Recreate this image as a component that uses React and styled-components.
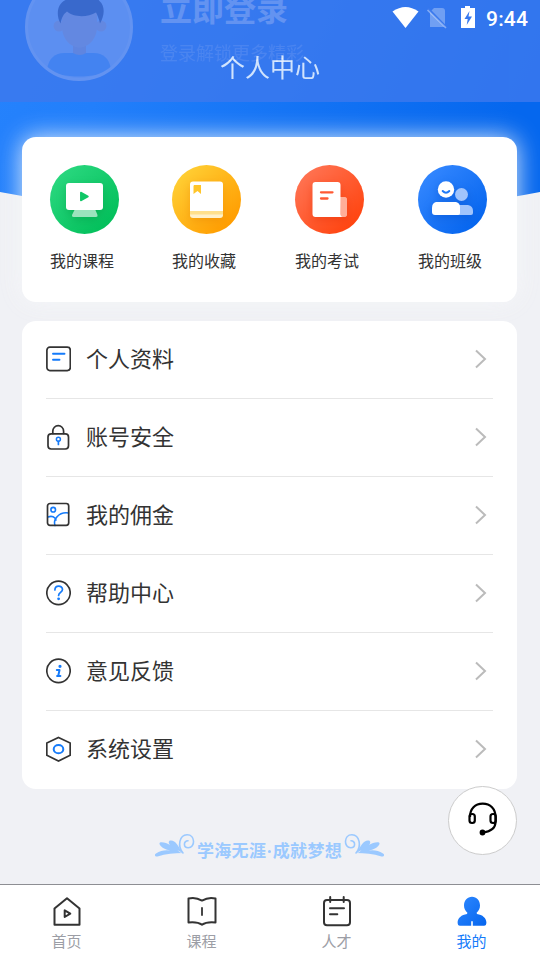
import React from "react";
import styled, { createGlobalStyle } from "styled-components";

const GlobalStyle = createGlobalStyle`
  * {
    box-sizing: border-box;
  }

  body {
    margin: 0;
    font-family: "Noto Sans CJK SC", "Noto Sans", sans-serif;
    color: #333;
  }
`;

const Screen = styled.div`
  position: relative;
  display: flex;
  flex-direction: column;
  width: 540px;
  height: 960px;
  background: #f0f1f5;
  overflow: hidden;
`;

const Content = styled.main`
  position: relative;
  flex: 1;
  min-height: 0;
  display: flex;
  flex-direction: column;
  padding: 0 23px 0 22px;
  overflow: hidden;
`;

const Backdrop = styled.div`
  position: absolute;
  top: 0;
  left: 0;
  width: 540px;
  height: 220px;
  background: linear-gradient(115deg, #2683fd 0%, #227ffb 22%, #0567ee 88%);
  clip-path: path("M0 0 H540 V192 Q405 218 270 218 Q135 218 0 192 Z");
`;

/* Profile, scrolled partly under the title bar */
const Profile = styled.section`
  position: relative;
  display: flex;
  flex: none;
  gap: 27px;
  height: 164px;
  margin-top: -27px;
  padding-left: 3px;
`;

const Avatar = styled.div`
  flex: none;
  width: 108px;
  height: 108px;
  border: 3px solid #fff;
  border-radius: 50%;
  background: #dcebff;
  overflow: hidden;

  svg {
    display: block;
  }
`;

const ProfileText = styled.div`
  color: #fff;
  padding-top: 16px;

  h2 {
    margin: 0;
    font-size: 32px;
    line-height: 36px;
    font-weight: 700;
  }

  p {
    margin: 15px 0 0;
    font-size: 18px;
    line-height: 24px;
    opacity: 0.45;
  }
`;

const Card = styled.section`
  position: relative;
  flex: none;
  background: #fff;
  border-radius: 14px;
`;

const ShortcutCard = styled(Card)`
  display: grid;
  grid-template-columns: 122px 123px 123px 1fr;
  height: 165px;
  padding: 28px 0 0 28px;
  box-shadow: 0 0 24px rgba(246, 247, 250, 0.9);
`;

const Shortcut = styled.div`
  font-size: 16px;
  line-height: 20px;
`;

const Disc = styled.div`
  width: 69px;
  height: 69px;
  margin-bottom: 16px;
  border-radius: 50%;
  background: linear-gradient(135deg, ${(p) => p.$from} 10%, ${(p) => p.$to} 88%);

  svg {
    display: block;
    filter: drop-shadow(0 3px 4px ${(p) => p.$shade});
  }
`;

const MenuCard = styled(Card)`
  margin-top: 19px;
  padding: 0 24px;
`;

const MenuRow = styled.div`
  display: flex;
  align-items: center;
  height: 78px;
  padding: 0 6px 2px 0;
  font-size: 22px;
  line-height: 30px;
  border-bottom: 1px solid ${(p) => (p.$last ? "transparent" : "#e6e6e6")};

  span {
    flex: 1;
    margin-left: 15px;
    padding-bottom: 3px;
  }
`;

const Slogan = styled.div`
  display: flex;
  justify-content: center;
  gap: 1px;
  margin-top: 44px;
  color: #9bc9ff;
  font-size: 17px;
  line-height: 34px;
  font-weight: 700;
  letter-spacing: 0.3px;
  white-space: nowrap;

  p {
    display: flex;
    justify-content: space-between;
    width: 147px;
    margin: 0;
    padding: 0 1px;
  }
`;

const Dot = styled.i`
  align-self: center;
  width: 3px;
  height: 3px;
  border-radius: 50%;
  background: currentColor;
`;

const FlippedFlourish = styled.div`
  transform: scaleX(-1);
`;

/* Title bar over the scrolled content */
const Header = styled.header`
  position: absolute;
  top: 0;
  left: 0;
  width: 540px;
  height: 102px;
  padding-top: 35px;
  background: #3d79ee;
  color: #fff;
  font-size: 25px;
  line-height: 62px;
  text-align: center;
  opacity: 0.8;
`;

const StatusBar = styled.div`
  position: absolute;
  top: 0;
  right: 0;
  display: flex;
  align-items: center;
  height: 36px;
  padding-right: 12px;
  color: #fff;
  font: 500 21px/36px Roboto, sans-serif;
  letter-spacing: 0.2px;

  span {
    width: 42px;
    margin-left: 10px;
    padding-top: 2px;
  }
`;

const ServiceButton = styled.button`
  position: absolute;
  top: 786px;
  left: 448px;
  display: flex;
  width: 69px;
  height: 69px;
  padding: 0;
  border: 1px solid #ccc;
  border-radius: 50%;
  background: #fff;
`;

const TabBar = styled.nav`
  display: grid;
  grid-template-columns: repeat(4, 1fr);
  flex: none;
  height: 76px;
  border-top: 1px solid #8d8e93;
  background: #fff;
`;

const Tab = styled.div`
  display: flex;
  flex-direction: column;
  align-items: center;
  padding: 9px 2px 0 0;
  font-size: 15px;
  line-height: 20px;
  color: ${(p) => (p.$active ? "#157bfa" : "#9c9ea6")};

  svg {
    margin-bottom: 2px;
  }
`;

const shortcuts = [
  {
    label: "我的课程",
    from: "#2bd880",
    to: "#02bf5a",
    shade: "rgba(0, 140, 60, 0.35)",
    icon: (
      <>
        <path d="M25 44h20l2.500 6q.5 2-1.500 2H23.500q-2 0-1.500-2z" fill="#9be3bd" />
        <rect x="16" y="18" width="37" height="27" rx="3" fill="#fff" />
        <path d="M30.800 27.500v8l7.200-4z" fill="#10c767" stroke="#10c767" strokeWidth="1.500" strokeLinejoin="round" />
      </>
    ),
  },
  {
    label: "我的收藏",
    from: "#ffd035",
    to: "#ff9c00",
    shade: "rgba(225, 120, 0, 0.35)",
    icon: (
      <>
        <rect x="18" y="40" width="33" height="13" rx="3" fill="#fff1cb" />
        <path d="M18 46h33v3.500H18z" fill="#ffe08c" />
        <path d="M21 16.500h27q3 0 3 3V46H18V19.500q0-3 3-3z" fill="#fff" />
        <path d="M22 20h7v9l-3.500-3-4 3v-8z" fill="#ffc52a" />
      </>
    ),
  },
  {
    label: "我的考试",
    from: "#ff7454",
    to: "#ff440f",
    shade: "rgba(220, 40, 0, 0.35)",
    icon: (
      <>
        <path d="M44 32h5q3 0 3 3v14q0 3-3 3h-5z" fill="#ffae98" />
        <path d="M20.500 17h22q3 0 3 3v29q0 3 3 3h-28q-3 0-3-3V20q0-3 3-3z" fill="#fff" />
        <path d="M46 32h3q3 0 3 3v14q0 3-3 3t-3.500-3z" fill="#ffae98" />
        <path d="M26 27.300h11.500M26 33.500h6.500" stroke="#ff5933" strokeWidth="2.300" strokeLinecap="round" />
      </>
    ),
  },
  {
    label: "我的班级",
    from: "#3487ff",
    to: "#0565ee",
    shade: "rgba(0, 70, 190, 0.35)",
    icon: (
      <>
        <circle cx="43.500" cy="29.500" r="6.500" fill="#a0c4fc" />
        <path d="M38 40h12q5 1 5 6v2q0 2-2 2H38z" fill="#a0c4fc" />
        <circle cx="28" cy="24.500" r="8.200" fill="#fff" />
        <path d="M24.700 26q3.300 3.500 6.600 0" fill="none" stroke="#207af7" strokeWidth="2" strokeLinecap="round" />
        <path d="M18 37h20q4 1 4 5v6q0 2-2 2H17q-3 0-3-3v-4q0-5 4-6z" fill="#fff" />
      </>
    ),
  },
];

const menu = [
  {
    label: "个人资料",
    icon: (
      <>
        <rect x=".9" y="1.200" width="23.400" height="23.400" rx="3" />
        <path d="M7 7.700h11.500M7 13.700h6.500" stroke="#157bfa" strokeWidth="1.900" />
      </>
    ),
  },
  {
    label: "账号安全",
    icon: (
      <>
        <rect x="2" y="9.800" width="20.500" height="15.200" rx="3.200" />
        <path d="M6.800 9.500V7.300a5.400 5.700 0 0 1 10.800 0v2.200" />
        <circle cx="12.400" cy="15.300" r="2" stroke="#157bfa" strokeWidth="1.500" />
        <path d="M12.400 17.300v3.200" stroke="#157bfa" />
      </>
    ),
  },
  {
    label: "我的佣金",
    icon: (
      <>
        <circle cx="7.200" cy="7.700" r="2.300" stroke="#157bfa" strokeWidth="1.600" />
        <path d="M2 15c4-1.500 7 0 8 3M9 23.500c-2-5 3-14 13.500-12.500" stroke="#157bfa" strokeWidth="1.600" />
        <rect x="1.500" y="1.500" width="21.200" height="21.800" rx="2.500" />
      </>
    ),
  },
  {
    label: "帮助中心",
    icon: (
      <>
        <circle cx="12.500" cy="12.900" r="11.700" />
        <path d="M8.900 10c0-5.200 7.600-4.900 7.600-.5 0 2.900-3.900 3-3.900 6" stroke="#157bfa" strokeWidth="1.700" />
        <circle cx="12.600" cy="18.800" r=".8" fill="#157bfa" stroke="#157bfa" strokeWidth="1.200" />
      </>
    ),
  },
  {
    label: "意见反馈",
    icon: (
      <>
        <circle cx="12.500" cy="12.900" r="11.700" />
        <circle cx="14" cy="8.300" r=".8" fill="#157bfa" stroke="#157bfa" strokeWidth="1.600" />
        <path d="M10.800 12h2.700l-1.300 6h2.200m-3.300 0h1" stroke="#157bfa" strokeWidth="2" />
      </>
    ),
  },
  {
    label: "系统设置",
    icon: (
      <>
        <path d="M12.500 1.500 24.200 7v12.200L12.500 25 .8 19.200V7z" strokeLinejoin="miter" />
        <ellipse cx="12.500" cy="13.200" rx="4.800" ry="4.100" stroke="#157bfa" strokeWidth="2" />
      </>
    ),
  },
];

const tabs = [
  {
    label: "首页",
    icon: (
      <>
        <path d="M2.500 12.500 15 2.200l12.500 10.300v16.200H2.500z" />
        <path d="M12.700 14.300v6.700l5.600-3.300z" />
      </>
    ),
  },
  {
    label: "课程",
    icon: (
      <>
        <path d="M1.500 2.500C7 1 11 2.200 15 4.600c4-2.400 8-3.600 13.500-2.100v24C22 25.800 19 26 15 28.700 11 26 8 25.800 1.500 26.500z" />
        <path d="M15 12v7" strokeWidth="1.800" />
      </>
    ),
  },
  {
    label: "人才",
    icon: (
      <>
        <rect x="2" y="4" width="26" height="25.200" rx="3" />
        <path d="M8.200 1v5M21.700 1v5M8 12.200h14M8 18.300h7.300" />
      </>
    ),
  },
  {
    label: "我的",
    active: true,
    icon: (
      <path
        d="M15 .8c4.600 0 8 3.700 8 8.700 0 3-1.300 5.500-3.400 7.200l.4 1.300c5.500.7 9.400 4.200 9.400 8.500 0 2-.8 3.300-2.400 3.300H15.800v-4.500h-1.600v4.500H3C1.400 29.800.6 28.500.6 26.500.6 22.200 4.500 18.700 10 18l.4-1.300C8.300 15 7 12.500 7 9.500 7 4.500 10.400.8 15 .8z"
        fill="url(#mine)"
        stroke="none"
      />
    ),
  },
];

const Flourish = () => (
  <svg width="40" height="26" viewBox="0 0 40 26">
    <path
      d="M1 20.500C9 15 18 18 28 20c-9 0-17 .5-25.500 3.500-2.500.7-3.500-2-1.500-3zM5 9.500c6-1 13 4 20 9.800-7-1.300-15-1.800-19-6-1.500-1.500-2-3.300-1-3.800zM15 7.500c5-1 8 4.500 12 12-5-3-11-5-13-9-.6-1.300 0-2.700 1-3z"
      fill="currentColor"
    />
    <path
      d="M28 20C22 13 24.500 2 32 1.800c8.500-.2 8.500 13 1.200 13-5 0-5-7-.2-7"
      fill="none"
      stroke="currentColor"
      strokeWidth="1.600"
      strokeLinecap="round"
    />
  </svg>
);

const App = () => {
  return (
    <Screen>
      <GlobalStyle />
      <Content>
        <Backdrop />
        <Profile>
          <Avatar>
            <svg width="102" height="102" viewBox="0 0 102 102">
              <path d="M19 93c2-11 8-16 17-16h30c9 0 15 5 17 16-14 10-50 10-64 0z" fill="#60b0ff" />
              <path d="M45 66h13v11q-6 4-13 0z" fill="#e8b8a8" />
              <circle cx="31" cy="50" r="5.500" fill="#ffc8b0" />
              <circle cx="73" cy="50" r="5.500" fill="#ffc8b0" />
              <path d="M34 34h35v17c0 11-8 20.500-17.500 20.500S34 62 34 51z" fill="#ffc8b0" />
              <path d="M32.500 47.500c-5-9-3-20 5-23.500 1-8 28-8 34 1 6 5 5 15 .5 22.500-1-5-3-9-4-11-8 5-23 5-29-1-4 3-5 6-6.500 12z" fill="#2c2d48" />
            </svg>
          </Avatar>
          <ProfileText>
            <h2>立即登录</h2>
            <p>登录解锁更多精彩</p>
          </ProfileText>
        </Profile>

        <ShortcutCard>
          {shortcuts.map((item) => (
            <Shortcut key={item.label}>
              <Disc $from={item.from} $to={item.to} $shade={item.shade}>
                <svg width="69" height="69" viewBox="0 0 69 69">
                  {item.icon}
                </svg>
              </Disc>
              {item.label}
            </Shortcut>
          ))}
        </ShortcutCard>

        <MenuCard>
          {menu.map((item, index) => (
            <MenuRow key={item.label} $last={index === menu.length - 1}>
              <svg
                width="25"
                height="26"
                viewBox="0 0 25 26"
                fill="none"
                stroke="#333"
                strokeWidth="1.700"
                strokeLinecap="round"
                strokeLinejoin="round"
              >
                {item.icon}
              </svg>
              <span>{item.label}</span>
              <svg width="13" height="20" viewBox="0 0 13 20" fill="none" stroke="#bbb" strokeWidth="2">
                <path d="m2 1.500 9 8.500-9 8.500" />
              </svg>
            </MenuRow>
          ))}
        </MenuCard>

        <Slogan>
          <Flourish />
          <p>
            <span>学海无涯</span>
            <Dot />
            <span>成就梦想</span>
          </p>
          <FlippedFlourish>
            <Flourish />
          </FlippedFlourish>
        </Slogan>
      </Content>

      <Header>个人中心</Header>
      <StatusBar>
        <svg width="84" height="36" viewBox="0 0 84 36">
          <path d="M.5 11.500Q13.500 2.500 26.500 11.500L13.500 28z" fill="#fff" />
          <path d="M42 8h8q3 0 3 3v16H38V12z" fill="#fff" opacity=".3" />
          <path d="M36 8.500 54 27" stroke="#3a79ee" strokeWidth="2.500" />
          <path d="m35.500 10 18.500 18" stroke="#fff" strokeWidth="1.700" opacity=".38" />
          <path d="M73 6h5v2h5v20H69V8h4z" fill="#fff" />
          <path d="m77.500 11-5 8h3.200l-1 6 5.300-8.500h-3.500z" fill="#3678ee" />
        </svg>
        <span>9:44</span>
      </StatusBar>

      <ServiceButton aria-label="客服">
        <svg width="67" height="67" viewBox="0 0 67 67" fill="none" stroke="#000" strokeWidth="2.200">
          <path d="M21 30c0-8 5-13.300 12.700-13.300S46.500 22 46.500 30v5c0 6-5 9.500-12.500 10.500" />
          <rect x="20.500" y="27" width="5.300" height="9" rx="2.500" />
          <rect x="41.500" y="27" width="5.300" height="9" rx="2.500" />
          <circle cx="33.500" cy="45.500" r="1.800" fill="#000" />
        </svg>
      </ServiceButton>

      <TabBar>
        {tabs.map((tab) => (
          <Tab key={tab.label} $active={tab.active}>
            <svg
              width="30"
              height="35"
              viewBox="0 -2 30 35"
              fill="none"
              stroke="#333"
              strokeWidth="2"
              strokeLinecap="round"
              strokeLinejoin="round"
            >
              <defs>
                <linearGradient id="mine" x1="0" y1="0" x2="1" y2="1">
                  <stop offset="0" stopColor="#2e88ff" />
                  <stop offset="1" stopColor="#0565ee" />
                </linearGradient>
              </defs>
              {tab.icon}
            </svg>
            {tab.label}
          </Tab>
        ))}
      </TabBar>
    </Screen>
  );
};

export default App;
